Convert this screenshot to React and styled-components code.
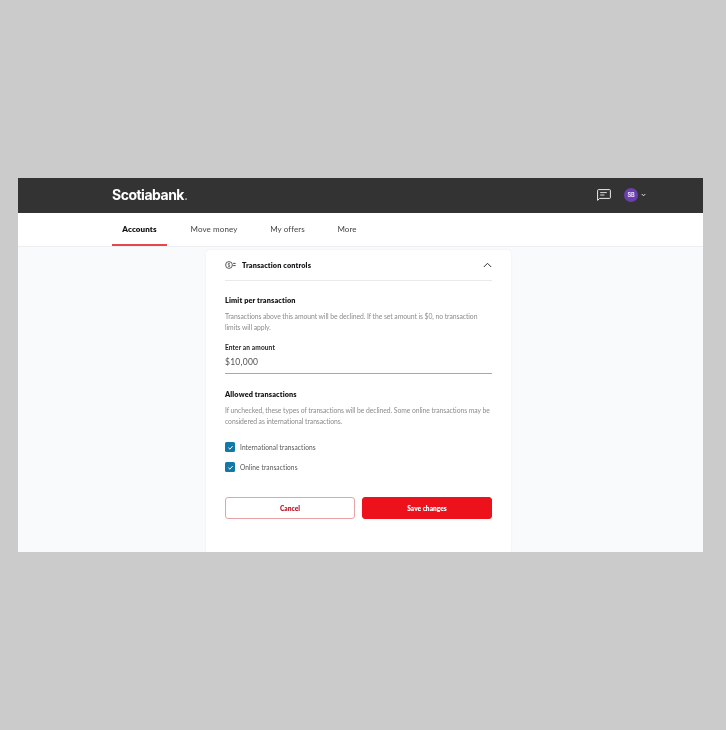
import styled, { createGlobalStyle } from 'styled-components'

const Global = createGlobalStyle`
  html, body { margin: 0; padding: 0; background: #cbcbcb; }
  * { box-sizing: border-box; }
  body { font-family: "Lato", "Liberation Sans", sans-serif; }
`

const Page = styled.div`
  width: 726px;
  height: 730px;
  padding: 178px 23px 0 18px;
`
const Frame = styled.div`
  height: 374px;
  background: #f9fafc;
  display: flex;
  flex-direction: column;
  overflow: hidden;
  filter: blur(0.3px);
`
const Header = styled.header`
  height: 35px;
  flex: none;
  background: #333333;
  display: flex;
  align-items: center;
  padding: 0 57px 2px 94px;
`
const Logo = styled.div`
  color: #fff;
  font-family: "Inter", sans-serif;
  font-size: 14px;
  font-weight: 700;
  letter-spacing: -0.5px;
  flex: 1;
  span { font-weight: 400; opacity: 0.7; }
`
const Avatar = styled.div`
  width: 14px;
  height: 14px;
  border-radius: 50%;
  background: #6c3fb0;
  color: #e9e2f5;
  font-family: "Inter", sans-serif;
  font-size: 5.5px;
  font-weight: 700;
  display: flex;
  align-items: center;
  justify-content: center;
  margin-left: 13px;
`
const Chevron = styled.svg`
  margin-left: 3px;
`
const Nav = styled.nav`
  height: 34px;
  flex: none;
  background: #fff;
  border-bottom: 1px solid #eceef1;
  display: flex;
  padding-left: 94px;
`
const Tab = styled.div`
  height: 33px;
  width: ${props => props.w}px;
  margin-right: ${props => props.gap || 0}px;
  padding-top: 11px;
  text-align: center;
  font-size: 8px;
  line-height: 11px;
  letter-spacing: 0.1px;
  color: ${props => props.active ? '#111' : '#444'};
  font-weight: ${props => props.active ? 800 : 400};
  border-bottom: ${props => props.active ? '2px solid #e4474f' : 'none'};
`
const Body = styled.main`
  flex: 1;
  display: flex;
  justify-content: center;
  padding: 3px 4px 0 0;
`
const Card = styled.section`
  width: 305px;
  height: 100%;
  background: #fff;
  border-radius: 4px 4px 0 0;
  box-shadow: 0 0 2px rgba(60, 70, 90, 0.08);
  padding: 0 19px;
`
const CardHead = styled.div`
  height: 31px;
  border-bottom: 1px solid #e9e9ea;
  display: flex;
  align-items: center;
`
const CardTitle = styled.div`
  flex: 1;
  margin-left: 6px;
  font-size: 7.3px;
  font-weight: 800;
  letter-spacing: 0.12px;
  color: #16161a;
`
const Heading = styled.div`
  font-size: 7.3px;
  line-height: 10px;
  font-weight: 800;
  letter-spacing: 0.12px;
  color: #16161a;
  margin-top: ${props => props.top}px;
`
const Hint = styled.p`
  margin: 5px 0 0;
  font-size: 6.8px;
  line-height: 11px;
  color: #8c8c90;
  letter-spacing: -0.06px;
`
const FieldLabel = styled.div`
  margin-top: 10px;
  font-size: 6.6px;
  line-height: 9px;
  font-weight: 700;
  color: #222;
  letter-spacing: 0.1px;
`
const AmountInput = styled.div`
  margin-top: 4px;
  height: 18px;
  border-bottom: 1px solid #a8a8ab;
  font-size: 8.5px;
  line-height: 12px;
  color: #555;
  letter-spacing: 0.25px;
`
const Checks = styled.div`
  margin-top: 15px;
  display: flex;
  flex-direction: column;
  gap: 10px;
`
const CheckRow = styled.label`
  display: flex;
  align-items: center;
  gap: 5px;
  font-size: 6.6px;
  color: #555;
  letter-spacing: 0.08px;
`
const CheckBox = styled.span`
  width: 10px;
  height: 10px;
  border-radius: 1.5px;
  background: #0f7aa8;
  display: flex;
  align-items: center;
  justify-content: center;
`
const Actions = styled.div`
  margin-top: 25px;
  display: grid;
  grid-template-columns: 130px 130px;
  gap: 7px;
`
const Button = styled.button`
  height: 22px;
  border-radius: 3px;
  border: 1px solid ${props => props.primary ? '#ec111a' : '#e9a2a6'};
  background: ${props => props.primary ? '#ec111a' : '#fff'};
  color: ${props => props.primary ? '#fff' : '#b81c2c'};
  font-family: inherit;
  font-size: 6.6px;
  font-weight: 800;
  padding: 0;
`

function Tick() {
  return (
    <svg width="7" height="7" viewBox="0 0 10 10" fill="none">
      <path d="M2 5.3 4.2 7.4 8 3" stroke="#fff" strokeWidth="1.4" />
    </svg>
  )
}

export default function App() {
  return (
    <Page>
      <Global />
      <Frame>
        <Header>
          <Logo>Scotiabank<span>.</span></Logo>
          <svg width="14" height="12" viewBox="0 0 14 12" fill="none">
            <path d="M.6 11.4V1.4C.6.9.9.6 1.4.6h11.2c.5 0 .8.3.8.8v7.2c0 .5-.3.8-.8.8H2.6L.6 11.4Z" stroke="#ececec" strokeWidth="1" />
            <path d="M3.2 3.6h6.6M3.2 6h4.2" stroke="#dcdcdc" strokeWidth="1" />
          </svg>
          <Avatar>SB</Avatar>
          <Chevron width="5" height="4" viewBox="0 0 6 4" fill="none">
            <path d="M.8.8 3 3l2.2-2.2" stroke="#f2f2f2" strokeWidth="1.1" />
          </Chevron>
        </Header>
        <Nav>
          <Tab active w={55} gap={13}>Accounts</Tab>
          <Tab w={68} gap={11.5}>Move money</Tab>
          <Tab w={56} gap={17.5}>My offers</Tab>
          <Tab w={28}>More</Tab>
        </Nav>
        <Body>
          <Card>
            <CardHead>
              <svg width="11" height="10" viewBox="0 0 11 10" fill="none">
                <circle cx="4" cy="5" r="3.4" stroke="#333" strokeWidth="0.8" />
                <path d="M4 3v4M5 3.8C4.6 3.3 3 3.3 3 4.2S5 5 5 5.9 3.4 6.7 3 6.2" stroke="#333" strokeWidth="0.5" />
                <path d="M8.2 3.4h2.4M8.2 5.6h2.4" stroke="#333" strokeWidth="0.9" />
              </svg>
              <CardTitle>Transaction controls</CardTitle>
              <svg width="9" height="6" viewBox="0 0 9 6" fill="none">
                <path d="M.8 5 4.5 1.3 8.2 5" stroke="#333" strokeWidth="1" />
              </svg>
            </CardHead>
            <Heading top={15}>Limit per transaction</Heading>
            <Hint>Transactions above this amount will be declined. If the set amount is $0, no transaction limits will apply.</Hint>
            <FieldLabel>Enter an amount</FieldLabel>
            <AmountInput>$10,000</AmountInput>
            <Heading top={16}>Allowed transactions</Heading>
            <Hint>If unchecked, these types of transactions will be declined. Some online transactions may be considered as international transactions.</Hint>
            <Checks>
              <CheckRow><CheckBox><Tick /></CheckBox>International transactions</CheckRow>
              <CheckRow><CheckBox><Tick /></CheckBox>Online transactions</CheckRow>
            </Checks>
            <Actions>
              <Button>Cancel</Button>
              <Button primary>Save changes</Button>
            </Actions>
          </Card>
        </Body>
      </Frame>
    </Page>
  )
}
